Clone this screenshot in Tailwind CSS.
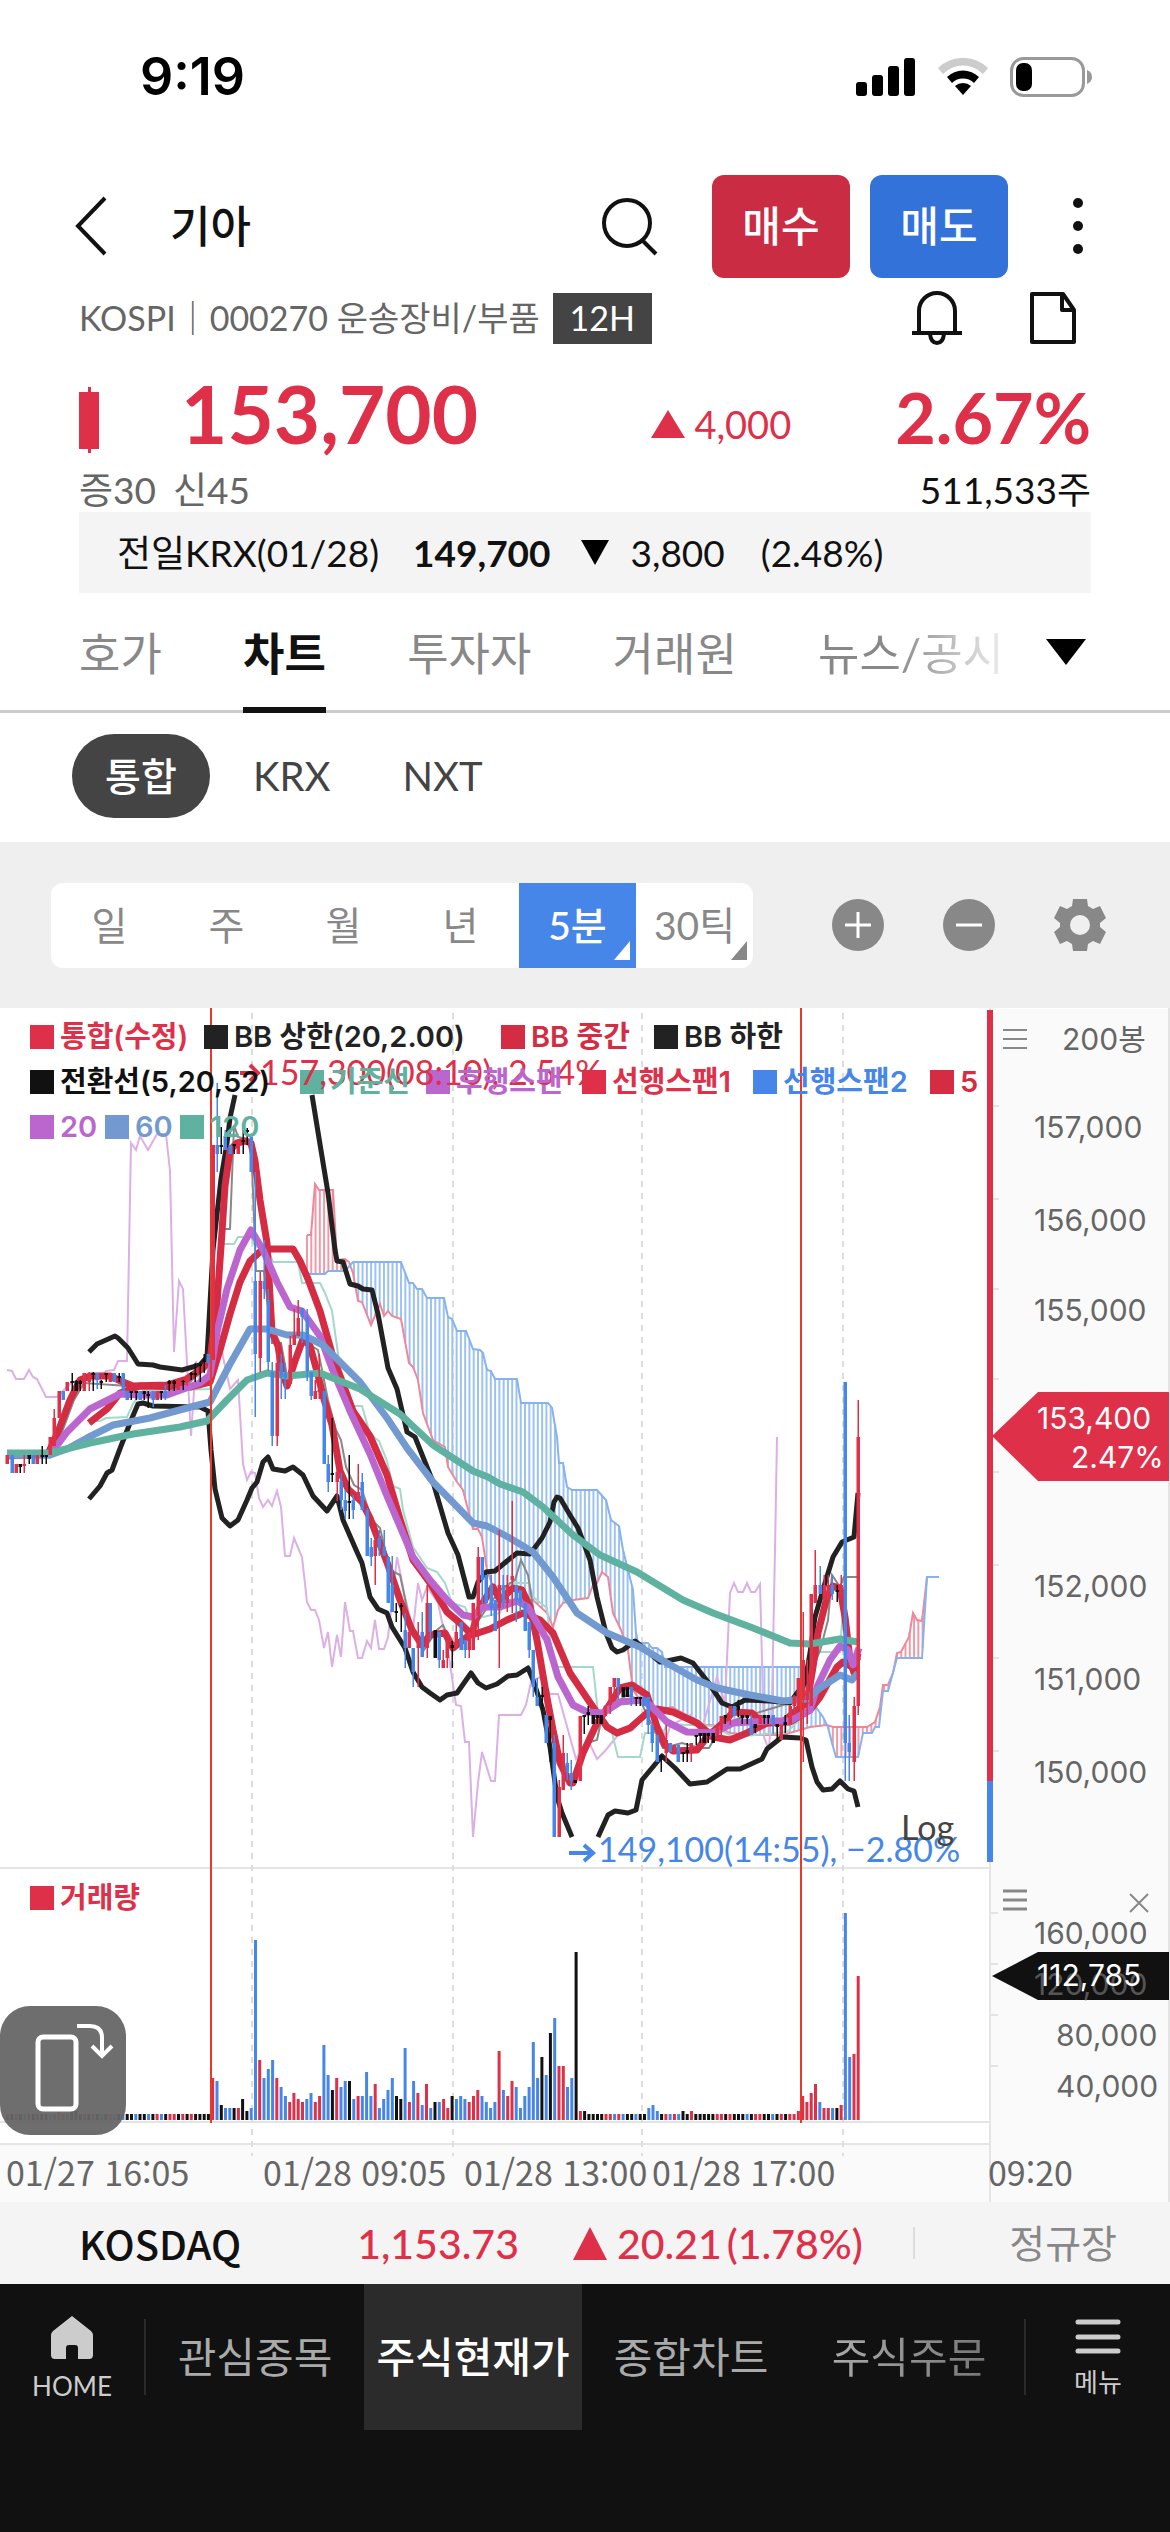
<!DOCTYPE html>
<html lang="ko">
<head>
  <meta charset="UTF-8">
  <meta name="viewport" content="width=device-width, initial-scale=1.0">
  <title>기아 - 차트</title>
  <script src="https://cdn.jsdelivr.net/npm/@tailwindcss/browser@4"></script>
</head>
<body class="bg-white text-[#111] font-[Lato,'Noto_Sans_CJK_KR',sans-serif]">

  <!-- 상태바 -->
  <div class="h-[154px] pl-[140px] pr-[78px] flex items-center justify-between text-black">
    <span class="text-[52px] leading-none font-semibold font-[Inter,sans-serif]">9:19</span>
    <div class="flex items-center gap-[22px]">
      <svg class="w-[60px] h-[38px]" viewBox="0 0 60 38">
        <rect x="0" y="24" width="11" height="14" rx="3"/><rect x="16" y="17" width="11" height="21" rx="3"/>
        <rect x="32" y="8" width="11" height="30" rx="3"/><rect x="48" y="0" width="11" height="38" rx="3"/>
      </svg>
      <svg class="w-[50px] h-[38px]" viewBox="0 0 50 38">
        <path d="M0 10 A36 36 0 0 1 50 10 L45 16 A28 28 0 0 0 5 16Z" fill="#ccc"/>
        <path d="M9 19 A23 23 0 0 1 41 19 L36 25 A16 16 0 0 0 14 25Z"/>
        <path d="M17 28 A12 12 0 0 1 33 28 L25 37Z"/>
      </svg>
      <svg class="w-[82px] h-[40px]" viewBox="0 0 82 40">
        <rect x="1.5" y="1.5" width="72" height="37" rx="12" fill="none" stroke="#999" stroke-width="3"/>
        <rect x="6" y="6" width="16" height="28" rx="7"/>
        <path d="M77 13 q5 2 5 7 t-5 7z" fill="#999"/>
      </svg>
    </div>
  </div>

  <!-- 종목 헤더 -->
  <header class="pl-[74px] pr-[82px]">
    <div class="h-[144px] flex items-center">
      <button aria-label="뒤로">
        <svg class="w-[34px] h-[60px]" viewBox="0 0 34 60" fill="none" stroke="#111" stroke-width="4"><path d="M31 2 L4 30 L31 58"/></svg>
      </button>
      <h1 class="ml-[62px] text-[44px] font-medium">기아</h1>
      <button aria-label="검색" class="ml-auto mr-[54px]">
        <svg class="w-[57px] h-[60px]" viewBox="0 0 57 60" fill="none" stroke="#111" stroke-width="4"><circle cx="26" cy="27" r="23"/><path d="M41 44 L55 58"/></svg>
      </button>
      <button class="w-[138px] h-[103px] rounded-xl bg-[#c92c43] text-white text-[42px] font-medium">매수</button>
      <button class="ml-[20px] w-[138px] h-[103px] rounded-xl bg-[#3272d9] text-white text-[42px] font-medium">매도</button>
      <button aria-label="더보기" class="ml-[60px]">
        <svg class="w-[20px] h-[60px]" viewBox="0 0 20 60" fill="#111"><circle cx="10" cy="7" r="5"/><circle cx="10" cy="30" r="5"/><circle cx="10" cy="53" r="5"/></svg>
      </button>
    </div>
    <div class="-mt-2 pl-[5px] h-[56px] flex items-center text-[34px] leading-none text-[#666]">
      <span>KOSPI｜000270 운송장비/부품</span>
      <span class="ml-[13px] w-[99px] h-[51px] bg-[#444] text-white flex items-center justify-center">12H</span>
      <button aria-label="알림" class="ml-auto">
        <svg class="w-[52px] h-[54px]" viewBox="0 0 52 54" fill="none" stroke="#111" stroke-width="4"><path d="M8 42 V20 a18 18 0 0 1 36 0 V42 M1 42 H51 M19 43 q1 9 7 9 t7 -9"/></svg>
      </button>
      <button aria-label="메모" class="ml-[66px] mr-[11px]">
        <svg class="w-[48px] h-[54px]" viewBox="0 0 48 54" fill="none" stroke="#111" stroke-width="4" stroke-linejoin="round"><path d="M3 3 H34 L45 19 V51 H3Z M33 3 V19 H45"/></svg>
      </button>
    </div>
  </header>

  <!-- 현재가 -->
  <section class="mx-[79px]">
    <div class="h-[120px] pt-[27px] flex items-baseline text-[#de3048]">
      <svg class="self-center w-[20px] h-[66px]" viewBox="0 0 20 66" fill="#de3048"><path d="M0 5H9V0H12V5H20V62H12V66H9V62H0Z"/></svg>
      <strong class="ml-[82px] text-[80px] leading-none font-bold">153,700</strong>
      <div class="self-center ml-auto mr-[104px] pt-[8px] flex items-center gap-[9px] text-[38px] leading-none">
        <svg class="w-[34px] h-[28px]" viewBox="0 0 34 28" fill="#de3048"><path d="M17 0L34 28H0Z"/></svg>4,000
      </div>
      <strong class="text-[70px] leading-none font-bold">2.67%</strong>
    </div>
    <div class="h-[46px] flex items-center justify-between text-[37px] leading-none">
      <span class="text-[#666] flex gap-[17px]"><span>증30</span><span>신45</span></span><span>511,533주</span>
    </div>
    <div class="h-[81px] pl-[38px] flex items-center bg-[#f4f4f4] text-[37px]">
      <span>전일KRX(01/28)</span><b class="ml-[34px] font-bold">149,700</b>
      <svg class="ml-[30px] mr-[22px] w-[28px] h-[25px]" viewBox="0 0 28 25"><path d="M0 0H28L14 25Z"/></svg>
      <span>3,800</span><span class="ml-[36px]">(2.48%)</span>
    </div>
  </section>

  <!-- 메뉴 탭 -->
  <nav class="h-[120px] px-[79px] border-b-3 border-[#ccc] flex text-[45px] text-[#888]">
    <div class="flex-1 flex justify-between">
      <a href="#" class="flex items-center pt-[6px]">호가</a>
      <a href="#" class="h-[120px] flex items-center pt-[10px] border-b-6 border-[#111] text-[#111] font-bold">차트</a>
      <a href="#" class="flex items-center pt-[6px]">투자자</a>
      <a href="#" class="flex items-center pt-[6px]">거래원</a>
      <a href="#" class="flex items-center pt-[6px]"><span class="bg-linear-to-r from-[#888] from-40% to-[#eee] bg-clip-text text-transparent">뉴스/공시</span></a>
    </div>
    <button aria-label="탭 더보기" class="ml-[42px] mr-[5px]">
      <svg class="w-[40px] h-[26px]" viewBox="0 0 40 26"><path d="M0 0H40L20 26Z"/></svg>
    </button>
  </nav>

  <!-- 거래소 선택 -->
  <div class="h-[129px] pb-[3px] pl-[72px] flex items-center text-[40px] text-[#444]">
    <button class="w-[138px] h-[84px] rounded-full bg-[#444] text-white font-medium text-[39px]">통합</button>
    <button class="ml-[43px]">KRX</button>
    <button class="ml-[72px]">NXT</button>
  </div>

  <!-- 주기 선택 -->
  <div class="h-[166px] pl-[51px] pr-[64px] bg-[#efefef] flex items-center justify-between">
    <div class="w-[702px] h-[85px] rounded-xl bg-white overflow-hidden grid grid-cols-6 text-[39px] text-[#888]">
      <button>일</button><button>주</button><button>월</button><button>년</button>
      <button class="relative bg-[#4586e8] text-white font-medium">5분
        <svg class="absolute right-[6px] bottom-[8px] w-[16px] h-[19px]" viewBox="0 0 16 19" fill="#fff"><path d="M16 0V19H0Z"/></svg>
      </button>
      <button class="relative">30틱
        <svg class="absolute right-[6px] bottom-[8px] w-[16px] h-[19px]" viewBox="0 0 16 19" fill="#888"><path d="M16 0V19H0Z"/></svg>
      </button>
    </div>
    <div class="flex items-center gap-[59px]">
      <button aria-label="확대"><svg class="w-[52px] h-[52px]" viewBox="0 0 52 52"><circle cx="26" cy="26" r="26" fill="#888"/><path d="M13 26H39M26 13V39" stroke="#fff" stroke-width="3"/></svg></button>
      <button aria-label="축소"><svg class="w-[52px] h-[52px]" viewBox="0 0 52 52"><circle cx="26" cy="26" r="26" fill="#888"/><path d="M13 26H39" stroke="#fff" stroke-width="3"/></svg></button>
      <button aria-label="설정"><svg class="w-[52px] h-[52px]" viewBox="0 0 52 52"><path fill="#888" fill-rule="evenodd" d="M19 0H33L34 7L39 10L46 7L52 19L46 24V28L52 33L46 45L39 42L34 45L33 52H19L18 45L13 42L6 45L0 33L6 28V24L0 19L6 7L13 10L18 7Z M26 16a10 10 0 1 0 0 20a10 10 0 1 0 0-20Z"/></svg></button>
    </div>
  </div>

  <!-- 차트 -->
  <main class="relative">
    <svg class="block w-full h-auto" viewBox="0 1008 1170 1194" fill="none">
      <rect x="990" y="1009" width="178" height="1193" fill="#fafafa"/>
      <rect x="0" y="2145" width="990" height="57" fill="#fafafa"/>
      <path d="M990 1008V2202M1169 1008V2202" stroke="#e4e4e4" stroke-width="2"/>
      <path d="M0 1868H990M0 2122H990M0 2144H990" stroke="#e4e4e4" stroke-width="2"/>
      <path d="M993 1106h6m-6 93h6m-6 90h6m-6 90h6m-6 93h6m-6 93h6m-6 93h6m-6 93h6M991 1913h7m-7 51h7m-7 51h7m-7 51h7" stroke="#e4e4e4" stroke-width="2"/>
      <path d="M252 1013V2156M453 1013V2156M642 1013V2156M843 1013V2156" stroke="#ddd" stroke-width="2" stroke-dasharray="6 6"/>

      <!-- 선행스팬 구름대 -->
      <g id="cloud" stroke-width="2"></g>
      <polyline id="spanA" stroke="#ef8799" stroke-width="2"/>
      <polyline id="spanB" stroke="#86b3f0" stroke-width="2"/>
      <!-- 후행스팬 -->
      <polyline stroke="#dcb0e5" stroke-width="2" points="7,1370 12,1371 16,1379 24,1379 29,1370 33,1377 37,1379 46,1397 57,1397 72,1382 100,1379 106,1371 114,1370 118,1361 127,1361 131,1143 136,1150 140,1136 148,1150 157,1134 166,1134 170,1171 174,1352 179,1281 183,1289 191,1436 196,1361 200,1388 208,1379 217,1318 223,1357 230,1389 238,1380 243,1464 247,1480 251,1472 255,1473 259,1498 263,1507 268,1500 272,1506 277,1491 281,1507 285,1556 290,1556 294,1538 302,1557 307,1602 311,1610 315,1610 319,1620 324,1648 328,1632 332,1667 337,1635 341,1657 345,1602 350,1631 353,1631 358,1658 362,1658 367,1641 371,1648 375,1620 379,1649 384,1649 388,1637 397,1557 405,1597 413,1630 418,1583 422,1600 427,1587 438,1603 448,1650 456,1705 461,1706 465,1742 469,1742 473,1837 478,1783 482,1752 491,1781 495,1781 499,1715 521,1715 526,1705 531,1682 540,1677 550,1694 558,1694 576,1759 588,1740 597,1759 605,1751 618,1735 633,1730 648,1710 667,1737 670,1726 690,1715 703,1725 717,1677 725,1703 730,1593 734,1583 738,1592 743,1592 747,1583 751,1592 755,1592 760,1584 764,1737 769,1750 772,1700 775,1550 777,1437"/>
      <!-- 기준선 -->
      <polyline stroke="#a4d8cb" stroke-width="2" points="89,1421 100,1421 106,1418 127,1417 133,1404 143,1391 210,1389 213,1321 223,1244 234,1244 238,1237 251,1237 255,1246 268,1250 273,1262 298,1262 302,1283 320,1283 325,1293 332,1311 340,1368 353,1406 362,1406 370,1434 379,1441 387,1461 393,1486 400,1489 403,1510 413,1547 427,1568 437,1572 445,1583 452,1603 465,1607 470,1620 500,1613 510,1583 529,1583 533,1597 547,1608 553,1667 593,1667 598,1713 612,1733 618,1757 640,1757 645,1733 663,1733 667,1724 713,1726 733,1737 787,1732 802,1717 812,1652 840,1652 845,1577 858,1577"/>
      <!-- 전환선 -->
      <polyline stroke="#888" stroke-width="2" points="48,1455 62,1432 74,1400 84,1383 128,1386 142,1387 165,1386 190,1382 210,1362 218,1290 224,1229 230,1229 234,1125 238,1137 251,1140 256,1271 264,1271 272,1343 281,1343 289,1387 303,1340 318,1350 328,1400 336,1430 341,1440 346,1467 354,1485 362,1490 372,1520 380,1528 390,1570 400,1575 412,1632 424,1650 437,1630 443,1625 452,1645 470,1632 500,1590 515,1580 521,1560 528,1575 535,1620 545,1680 555,1740 570,1780 590,1742 597,1740 603,1712 627,1695 640,1700 652,1725 663,1748 682,1743 700,1748 709,1748 722,1725 740,1718 800,1700 812,1670 820,1651 828,1620 832,1575 840,1587 844,1577 858,1577"/>

      <!-- 볼린저 밴드 상한 / 하한 -->
      <g stroke="#222" stroke-width="5" stroke-linejoin="round">
        <polyline points="89,1352 97,1344 115,1336 118,1338 128,1348 138,1364 153,1365 160,1367 182,1370 200,1365 207,1357 209,1321 213,1250 217,1214 221,1179 227,1143 230,1118 235,1095"/>
        <polyline points="312,1095 318,1132 328,1193 335,1250 337,1261 343,1262 350,1284 358,1286 363,1289 372,1290 378,1314 388,1368 397,1389 407,1432 415,1437 433,1482 448,1533 458,1555 469,1597 473,1597 478,1582 486,1572 495,1571 507,1561 517,1553 530,1554 542,1538 550,1522 554,1502 557,1497 560,1498 570,1515 578,1528 590,1560 597,1597 606,1633 612,1648 617,1652 623,1650 635,1641 660,1662 667,1661 681,1658 693,1663 708,1682 722,1703 732,1707 745,1700 770,1701 790,1703 797,1693 805,1683 810,1653 815,1617 825,1583 833,1557 842,1542 854,1537 858,1493"/>
        <polyline points="89,1499 100,1486 107,1473 112,1470 121,1446 132,1418 138,1404 143,1403 153,1406 200,1407 208,1411 211,1450 215,1489 222,1518 230,1526 238,1520 247,1500 252,1488 257,1482 263,1462 268,1457 273,1469 285,1471 293,1467 303,1475 313,1496 327,1511 337,1496 343,1520 357,1552 362,1563 370,1597 378,1609 387,1613 392,1627 405,1648 413,1672 422,1687 430,1693 440,1700 447,1695 457,1693 471,1673 478,1683 486,1688 497,1684 508,1676 517,1675 528,1668 533,1680 543,1710 550,1747 557,1797 562,1813 572,1837"/>
        <polyline points="598,1837 608,1815 615,1811 628,1813 636,1810 642,1780 657,1762 662,1756 675,1768 690,1784 707,1782 727,1769 740,1769 762,1759 767,1749 782,1737 800,1738 806,1740 812,1767 817,1782 823,1790 832,1789 840,1781 848,1789 854,1791 858,1807"/>
      </g>
      <!-- 이동평균선 -->
      <g stroke-width="7" stroke-linejoin="round">
        <polyline stroke="#d32c43" points="89,1423 107,1409 120,1393 140,1386 190,1387 210,1382 220,1350 230,1314 240,1282 250,1261 263,1249 293,1249 300,1261 308,1279 320,1311 333,1357 353,1411 370,1436 387,1475 400,1519 413,1560 430,1583 447,1612 460,1623 472,1635 490,1629 507,1620 523,1613 540,1620 553,1633 570,1673 593,1707 607,1727 617,1733 630,1728 647,1713 657,1709 673,1712 697,1723 713,1737 730,1740 747,1733 767,1723 790,1722 810,1710 820,1697 837,1667 843,1662 852,1667 858,1657"/>
        <polyline stroke="#d32c43" points="7,1456 48,1454 58,1432 70,1400 80,1380 90,1376 110,1376 123,1382 133,1386 167,1385 187,1379 203,1368 210,1361 217,1303 222,1232 225,1186 230,1150 237,1143 245,1141 251,1143 255,1161 260,1200 267,1243 272,1332 278,1346 282,1371 287,1386 295,1361 303,1339 310,1346 318,1375 323,1396 332,1425 340,1471 348,1489 362,1502 370,1518 388,1565 400,1600 412,1630 422,1645 430,1635 445,1633 453,1648 472,1633 480,1607 493,1587 500,1600 513,1588 522,1590 530,1607 537,1640 545,1687 553,1730 560,1763 570,1783 573,1783 583,1753 597,1723 608,1707 620,1688 632,1685 647,1695 657,1727 665,1745 673,1751 697,1750 707,1737 723,1723 733,1712 752,1713 763,1723 783,1722 797,1710 807,1703 813,1667 818,1633 827,1597 833,1586 840,1588 845,1617 850,1660 854,1673 858,1653"/>
        <polyline stroke="#bb66cf" points="7,1455 50,1455 67,1432 90,1409 120,1394 140,1395 167,1395 200,1383 210,1375 217,1332 227,1289 240,1250 251,1230 263,1250 277,1282 290,1307 302,1311 320,1336 333,1371 350,1411 370,1454 387,1496 413,1557 430,1580 447,1600 463,1615 473,1617 483,1607 500,1607 517,1601 528,1607 547,1640 558,1677 573,1705 587,1712 603,1713 620,1702 643,1700 650,1705 667,1722 687,1732 713,1733 733,1723 767,1721 790,1721 810,1710 817,1687 830,1660 840,1646 848,1650 853,1665 859,1648"/>
        <polyline stroke="#739ad0" points="7,1455 50,1455 67,1449 87,1438 113,1425 150,1418 187,1408 210,1402 230,1364 250,1329 267,1329 287,1335 303,1335 323,1345 360,1382 387,1418 407,1448 433,1482 473,1523 487,1526 508,1537 533,1552 553,1577 577,1613 607,1633 640,1647 667,1663 697,1680 717,1688 750,1695 783,1701 807,1699 820,1688 840,1675 852,1680 858,1673"/>
        <polyline stroke="#5fb1a0" points="7,1453 50,1453 90,1443 133,1434 180,1427 207,1421 227,1400 247,1380 267,1373 287,1376 320,1373 360,1389 400,1414 433,1445 473,1471 488,1477 500,1484 523,1492 543,1507 573,1535 600,1555 637,1572 683,1600 713,1613 753,1628 790,1643 810,1644 840,1639 858,1642"/>
      </g>

      <g id="candles"></g>

      <g id="volume"></g>
      <path d="M211 1008V2123M801 1008V2123" stroke="#e8392b" stroke-width="2"/>
      <path d="M990 1010V1781" stroke="#de3048" stroke-width="6"/>
      <path d="M990 1781V1862" stroke="#4586e8" stroke-width="6"/>

      <!-- 범례 -->
      <g>
        <rect x="30" y="1025" width="24" height="24" fill="#de3048"/><rect x="204" y="1025" width="24" height="24" fill="#222"/>
        <rect x="501" y="1025" width="24" height="24" fill="#d32c43"/><rect x="654" y="1025" width="24" height="24" fill="#222"/>
        <rect x="30" y="1070" width="24" height="24" fill="#111"/><rect x="300" y="1070" width="24" height="24" fill="#5fb1a0"/>
        <rect x="426" y="1070" width="24" height="24" fill="#bb66cf"/><rect x="582" y="1070" width="24" height="24" fill="#de3048"/>
        <rect x="753" y="1070" width="24" height="24" fill="#4586e8"/><rect x="930" y="1070" width="24" height="24" fill="#d32c43"/>
        <rect x="30" y="1115" width="24" height="24" fill="#bb66cf"/><rect x="105" y="1115" width="24" height="24" fill="#739ad0"/>
        <rect x="180" y="1115" width="24" height="24" fill="#5fb1a0"/><rect x="30" y="1886" width="24" height="24" fill="#de3048"/>
      </g>
      <g class="text-[34px]">
        <path d="M240 1073H256M250 1065l8 8l-8 8" stroke="#de3048" stroke-width="4"/>
        <text x="260" y="1085" fill="#de3048">157,300(08:10), 2.54%</text>
        <path d="M569 1853H592M584 1845l9 8l-9 8" stroke="#4586e8" stroke-width="4"/>
        <text x="598" y="1862" fill="#4586e8">149,100(14:55), −2.80%</text>
        <text x="901" y="1840" fill="#444">Log</text>
      </g>
      <g class="text-[29px] font-semibold font-[Inter,'Noto_Sans_CJK_KR',sans-serif]">
        <text x="60" y="1047" fill="#de3048">통합(수정)</text><text x="234" y="1047" fill="#222">BB 상한(20,2.00)</text>
        <text x="531" y="1047" fill="#d32c43">BB 중간</text><text x="684" y="1047" fill="#222">BB 하한</text>
        <text x="60" y="1092" fill="#111">전환선(5,20,52)</text><text x="330" y="1092" fill="#5fb1a0">기준선</text>
        <text x="456" y="1092" fill="#bb66cf">후행스팬</text><text x="612" y="1092" fill="#de3048">선행스팬1</text>
        <text x="783" y="1092" fill="#4586e8">선행스팬2</text><text x="960" y="1092" fill="#d32c43">5</text>
        <text x="60" y="1137" fill="#bb66cf">20</text><text x="135" y="1137" fill="#739ad0">60</text><text x="210" y="1137" fill="#5fb1a0">120</text>
        <text x="60" y="1908" fill="#de3048">거래량</text>
      </g>

      <!-- 가격축 -->
      <path d="M992 1436L1038 1392H1169V1481H1038Z" fill="#de3048"/>
      <path d="M992 1976L1038 1952H1169V2000H1038Z" fill="#111"/>
      <g class="text-[30px] font-[Inter,'Noto_Sans_CJK_KR',sans-serif]" fill="#666">
        <text x="1062" y="1050">200봉</text>
        <text x="1034" y="1138">157,000</text><text x="1034" y="1231">156,000</text><text x="1034" y="1321">155,000</text>
        <text x="1034" y="1597">152,000</text><text x="1034" y="1690">151,000</text><text x="1034" y="1783">150,000</text>
        <text x="1034" y="1944">160,000</text><text x="1034" y="1995" fill="#555">120,000</text>
        <text x="1056" y="2046">80,000</text><text x="1056" y="2097">40,000</text>
        <text x="1037" y="1429" fill="#fff">153,400</text><text x="1071" y="1468" fill="#fff">2.47%</text>
        <text x="1037" y="1986" fill="#fff">112,785</text>
      </g>
      <g class="text-[34px] font-['Noto_Sans_CJK_KR',sans-serif]" fill="#666">
        <text x="6" y="2186">01/27 16:05</text><text x="263" y="2186">01/28 09:05</text><text x="464" y="2186">01/28 13:00</text>
        <text x="652" y="2186">01/28 17:00</text><text x="988" y="2186">09:20</text>
      </g>
    </svg>
    <button aria-label="가격 메뉴" class="absolute left-[1003px] top-[20px]"><svg class="w-[24px] h-[22px]" viewBox="0 0 24 22" stroke="#888" stroke-width="2"><path d="M0 2H24M0 11H24M0 20H24"/></svg></button>
    <button aria-label="거래량 메뉴" class="absolute left-[1003px] top-[881px]"><svg class="w-[24px] h-[22px]" viewBox="0 0 24 22" stroke="#888" stroke-width="3"><path d="M0 2H24M0 11H24M0 20H24"/></svg></button>
    <button aria-label="거래량 닫기" class="absolute right-[21px] top-[884px]"><svg class="w-[20px] h-[22px]" viewBox="0 0 20 22" stroke="#888" stroke-width="2"><path d="M1 2L19 20M19 2L1 20"/></svg></button>
    <button aria-label="화면 회전" class="absolute left-0 bottom-[67px] w-[126px] h-[129px] rounded-[30px] bg-[#666]/95">
      <svg class="w-[126px] h-[129px]" viewBox="0 0 126 129" fill="none" stroke="#fff" stroke-width="5"><rect x="38" y="31" width="38" height="72" rx="5"/><path d="M77 20H90Q102 20 102 32V48M92 40L102 50L112 40" stroke-width="4"/></svg>
    </button>
  </main>

  <!-- 지수 -->
  <div class="h-[82px] pl-[79px] pr-[53px] bg-[#f4f4f4] flex items-center text-[41px] leading-none">
    <span class="font-medium text-[40px] font-['Noto_Sans_CJK_KR',sans-serif]">KOSDAQ</span>
    <span class="ml-[116px] font-medium text-[#de3048]">1,153.73</span>
    <svg class="ml-[54px] mr-[10px] w-[34px] h-[33px]" viewBox="0 0 34 33" fill="#de3048"><path d="M17 0L34 33H0Z"/></svg>
    <span class="font-medium text-[#de3048]">20.21</span>
    <span class="ml-[5px] font-medium text-[#de3048]">(1.78%)</span>
    <span class="ml-[50px] mr-auto w-[2px] h-[32px] bg-[#ddd]"></span>
    <span class="text-[39px] text-[#888]">정규장</span>
  </div>

  <!-- 하단 메뉴 -->
  <nav class="h-[248px] bg-[#111] text-[#aaa] text-[42px]">
    <div class="h-[146px] flex items-center">
      <a href="#" class="w-[144px] flex flex-col items-center gap-[14px] text-[26px] leading-none text-[#ccc]">
        <svg class="w-[42px] h-[43px]" viewBox="0 0 42 43" fill="#ccc"><path d="M21 0L40 15Q42 17 42 19V39Q42 43 38 43H27V32Q27 29 24 29H18Q15 29 15 32V43H4Q0 43 0 39V19Q0 17 2 15Z"/></svg>HOME
      </a>
      <span class="w-[2px] h-[76px] bg-[#2b2b2b]"></span>
      <div class="flex-1 h-full pr-[6px] grid grid-cols-4">
        <a href="#" class="flex items-center justify-center">관심종목</a>
        <a href="#" class="flex items-center justify-center bg-[#2b2b2b] text-white font-medium whitespace-nowrap">주식현재가</a>
        <a href="#" class="flex items-center justify-center">종합차트</a>
        <a href="#" class="flex items-center justify-center"><span class="bg-linear-to-r from-[#aaa] to-[#777] bg-clip-text text-transparent">주식주문</span></a>
      </div>
      <span class="w-[2px] h-[76px] bg-[#2b2b2b]"></span>
      <button class="w-[144px] flex flex-col items-center gap-[14px] text-[26px] leading-none text-[#ccc]">
        <svg class="w-[46px] h-[36px]" viewBox="0 0 46 36" stroke="#ccc" stroke-width="5" stroke-linecap="round"><path d="M3 3H43M3 18H43M3 32H43"/></svg>메뉴
      </button>
    </div>
  </nav>

  <script>
    const COLORS = { r: '#de3048', b: '#4586e8', k: '#111' };
    const STEP = 4.275;
    const rect = (x, y, w, h, c) => `<rect x="${x}" y="${y}" width="${w}" height="${h}" fill="${c}"/>`;

    // 선행스팬 (x,y)
    const spanA = '307,1235 311,1235 315,1184 319,1190 333,1190 337,1260 345,1259 349,1262 353,1273 358,1301 362,1302 371,1325 380,1304 384,1316 388,1311 392,1316 401,1319 409,1363 413,1367 418,1380 423,1413 433,1440 445,1447 448,1467 457,1482 463,1490 473,1529 478,1529 482,1537 487,1570 493,1587 500,1600 533,1600 547,1613 553,1627 558,1610 563,1603 573,1600 588,1598 593,1585 597,1583 602,1572 608,1577 613,1613 621,1630 628,1650 633,1690 638,1697 647,1707 657,1710 672,1707 690,1717 700,1725 713,1725 730,1733 753,1735 783,1735 810,1727 827,1725 833,1727 867,1727 875,1722 880,1707 883,1685 888,1685 893,1673 897,1653 901,1652 909,1637 913,1613 917,1620 922,1621 927,1577 939,1577';
    const spanB = '307,1274 325,1274 328,1271 345,1271 353,1262 401,1262 409,1283 413,1283 417,1289 422,1289 427,1298 444,1298 448,1317 452,1319 457,1331 466,1331 473,1349 480,1350 483,1353 487,1370 491,1371 495,1379 517,1379 521,1403 548,1403 552,1408 557,1437 559,1463 563,1463 567,1487 572,1490 597,1490 606,1500 611,1520 619,1526 623,1550 633,1590 636,1633 638,1643 648,1643 652,1648 657,1648 662,1652 665,1667 807,1667 813,1703 823,1717 828,1727 832,1743 836,1757 858,1757 863,1733 872,1733 875,1727 879,1727 883,1691 888,1691 897,1658 922,1658 927,1577 939,1577';
    document.getElementById('spanA').setAttribute('points', spanA);
    document.getElementById('spanB').setAttribute('points', spanB);

    const parse = s => s.split(' ').map(p => p.split(',').map(Number));
    function valueAt(points, x) {
      for (let i = 1; i < points.length; i++) {
        const [x0, y0] = points[i - 1], [x1, y1] = points[i];
        if (x <= x1) return y0 + (y1 - y0) * (x - x0) / (x1 - x0);
      }
      return points[points.length - 1][1];
    }
    const a = parse(spanA), b = parse(spanB);
    let cloud = '';
    for (let x = 307; x < 927; x += STEP) {
      const ya = valueAt(a, x), yb = valueAt(b, x);
      cloud += `<path d="M${x} ${ya}V${yb}" stroke="${ya < yb ? '#f09aa8' : '#9cc2f3'}"/>`;
    }
    document.getElementById('cloud').innerHTML = cloud;

    // 봉: 색 x 고가 몸통상단 몸통하단 저가
    const candles = `r7 1455 1455 1464 1464,b12 1455 1455 1473 1473,r16 1464 1464 1473 1473,k20 1464 1464 1467 1473,r24 1455 1464 1466 1473,k29 1455 1455 1459 1464,b33 1455 1455 1464 1464,r37 1455 1455 1464 1464,k42 1446 1455 1457 1464,k46 1455 1455 1457 1464,r50 1437 1437 1455 1455,r54 1409 1418 1446 1446,r59 1391 1391 1418 1418,b63 1391 1391 1400 1400,r67 1382 1382 1391 1391,k72 1373 1381 1383 1391,k76 1380 1381 1391 1391,k80 1380 1381 1384 1391,r84 1373 1373 1391 1391,r89 1372 1373 1382 1391,k93 1372 1373 1375 1391,b97 1373 1373 1380 1389,k101 1380 1381 1383 1389,k106 1373 1373 1375 1382,r110 1373 1373 1382 1382,b114 1373 1373 1382 1382,k119 1373 1376 1378 1382,b123 1373 1373 1391 1391,b127 1391 1391 1400 1400,k131 1391 1391 1393 1400,k136 1391 1391 1393 1400,b140 1391 1391 1400 1400,k144 1391 1391 1394 1400,k148 1391 1394 1396 1408,b153 1391 1391 1400 1407,r157 1391 1391 1400 1400,k161 1391 1391 1393 1400,b165 1385 1391 1398 1400,k169 1380 1381 1384 1391,k174 1380 1381 1384 1391,r178 1381 1381 1390 1390,k183 1380 1381 1382 1390,r187 1375 1375 1382 1386,k191 1372 1373 1375 1380,k195 1363 1373 1375 1382,k200 1363 1364 1366 1382,k204 1354 1360 1362 1373,b208 1354 1354 1363 1363,r213 1145 1145 1360 1360,b217 1083 1145 1154 1172,k221 1127 1145 1147 1154,b225 1130 1136 1150 1150,b230 1145 1145 1154 1154,k234 1144 1144 1146 1154,r238 1140 1140 1154 1154,k243 1127 1140 1142 1154,k247 1128 1130 1132 1145,b251 1137 1137 1172 1172,b255 1172 1281 1354 1417,r260 1272 1281 1358 1372,b264 1240 1281 1289 1299,b268 1289 1300 1362 1371,b272 1362 1372 1436 1446,r277 1340 1363 1436 1446,b281 1354 1363 1377 1399,b285 1363 1373 1378 1399,r290 1336 1345 1384 1384,r294 1309 1335 1345 1345,r298 1300 1318 1336 1336,b302 1308 1308 1317 1343,b307 1309 1317 1371 1381,b311 1372 1372 1396 1400,r315 1380 1391 1399 1399,r319 1354 1390 1392 1399,b324 1391 1391 1464 1464,b328 1455 1464 1482 1492,k332 1418 1473 1475 1482,r337 1470 1472 1482 1501,b341 1473 1481 1500 1510,b345 1490 1500 1511 1519,k349 1455 1501 1503 1519,b353 1495 1500 1510 1519,r358 1464 1492 1500 1500,b362 1473 1482 1510 1510,b367 1508 1510 1556 1556,b371 1538 1547 1557 1566,r375 1533 1540 1556 1585,b379 1530 1538 1548 1556,b384 1530 1547 1556 1556,b388 1556 1557 1603 1603,b392 1556 1585 1612 1612,k396 1603 1611 1613 1622,k401 1603 1605 1607 1632,b405 1613 1630 1648 1668,r409 1630 1632 1648 1648,b413 1648 1648 1672 1687,r418 1622 1640 1648 1687,b422 1612 1632 1657 1657,r427 1585 1603 1648 1658,b430 1603 1603 1632 1640,k435 1630 1630 1658 1658,b439 1632 1632 1660 1668,r443 1650 1660 1668 1668,r447 1640 1640 1658 1668,k452 1641 1645 1648 1668,r456 1620 1632 1648 1648,b461 1622 1622 1650 1650,b465 1640 1640 1650 1658,r469 1632 1632 1650 1658,r473 1603 1603 1650 1650,r478 1547 1557 1616 1640,b482 1557 1557 1580 1603,b486 1575 1575 1603 1603,b491 1575 1585 1608 1616,b495 1600 1600 1631 1631,r499 1530 1585 1608 1668,b503 1575 1585 1603 1608,r507 1575 1585 1603 1612,r512 1501 1576 1580 1613,b516 1585 1585 1600 1622,b520 1590 1590 1603 1612,b525 1603 1603 1631 1631,b529 1622 1622 1650 1658,b533 1650 1650 1687 1697,b537 1678 1697 1706 1706,k542 1687 1695 1697 1710,b546 1715 1715 1743 1743,k550 1716 1716 1720 1762,b554 1735 1743 1837 1837,r559 1780 1787 1837 1837,r563 1735 1753 1790 1790,b567 1753 1763 1772 1780,b571 1760 1773 1781 1790,k575 1780 1780 1783 1783,r580 1716 1716 1781 1781,k584 1715 1715 1717 1734,k588 1706 1712 1715 1725,k593 1715 1715 1724 1724,k597 1715 1715 1718 1724,k601 1715 1715 1724 1724,r605 1705 1706 1716 1716,r610 1687 1687 1705 1714,r614 1678 1678 1687 1700,b618 1678 1678 1687 1700,k623 1687 1687 1697 1697,k627 1687 1687 1697 1697,b631 1687 1687 1697 1706,k636 1697 1697 1699 1706,k640 1697 1697 1699 1706,b644 1697 1697 1706 1706,b648 1697 1697 1725 1734,b652 1725 1725 1743 1752,b657 1735 1735 1762 1762,k661 1755 1755 1758 1772,r666 1725 1740 1753 1762,b670 1743 1743 1752 1752,r674 1745 1745 1753 1753,b678 1745 1745 1762 1762,k683 1752 1752 1754 1762,k687 1743 1750 1753 1762,r691 1743 1743 1752 1762,k696 1735 1735 1737 1745,k700 1733 1733 1736 1743,k704 1733 1733 1743 1743,k708 1733 1733 1736 1743,k713 1733 1733 1743 1743,r717 1725 1725 1735 1735,r721 1716 1716 1730 1735,k725 1715 1715 1718 1724,r730 1706 1706 1716 1725,b734 1706 1706 1716 1716,k738 1700 1706 1710 1717,k742 1715 1715 1718 1724,k747 1715 1715 1718 1724,b751 1715 1725 1735 1735,k755 1724 1724 1728 1733,r760 1715 1715 1724 1724,k764 1715 1715 1718 1724,k768 1715 1715 1718 1724,b773 1715 1715 1724 1734,k777 1724 1724 1727 1740,r781 1725 1725 1740 1740,k785 1715 1722 1725 1733,r790 1706 1706 1724 1724,r794 1695 1697 1706 1715,r798 1678 1678 1706 1706,r803 1612 1660 1700 1762,r807 1660 1690 1700 1724,r811 1594 1594 1706 1706,r815 1550 1585 1603 1603,b820 1566 1585 1594 1594,r824 1575 1585 1600 1600,r828 1575 1585 1600 1600,b832 1575 1585 1594 1600,k837 1585 1590 1592 1602,r841 1575 1585 1597 1600,b845 1382 1382 1743 1781,b849 1715 1743 1752 1781,r854 1697 1706 1762 1781,r858 1400 1437 1706 1715`;
    document.getElementById('candles').innerHTML = candles.split(',').map(row => {
      const [key, high, top, bottom, low] = row.trim().split(' ');
      const x = Number(key.slice(1)), c = COLORS[key[0]];
      return rect(x - .5, high, 1.5, low - high, c) + rect(x - 1.5, top, 3.5, bottom - top, c);
    }).join('');

    // 거래량: 색과 높이, 숫자가 없으면 최소 높이
    const volume = `r k r k b r k r k k b r r9 r b k9 k9 k r k r k b k r b k b k k b k k b k r b k r r k r k r k k k k
      r42 b39 k15 b12 b12 k12 r12 k21 k9 b12 b180 r60 b42 b51 b60 r42 b33 b24 r18 r27 r21 r18 b21 b27 r18 r24 b75 b45 k30 r42 b33 b39 k39 b21 r24 b24 b48 b24 r36 b12 b21 b30 b42 k24 k21 b72 r18 b39 r27 b15 r36 b12 k18 b18 r21 r12 k24 b21 b24 b21 r18 r24 r30 b24 b18 b12 b18 r69 b30 r24 r39 b33 b12 b24 b33 b78 b42 k63 b45 k87 b102 r54 r54 b33 b42 k168 r9 k9
      k k k k r r b r b k k b k k b12 b15 b9 k r b r b k9 k r9 k k k k k r r k r k k k b k r r k k b k r k r r r9
      r24 r18 r27 r36 b18 r12 r12 b12 k12 r15 b207 b63 r66 r144`.split(/\s+/);
    document.getElementById('volume').innerHTML = volume.map((v, i) => {
      const h = Number(v.slice(1)) || 6;
      return rect((6 + i * STEP).toFixed(1), 2120 - h, 3, h, COLORS[v[0]]);
    }).join('');
  </script>
</body>
</html>
